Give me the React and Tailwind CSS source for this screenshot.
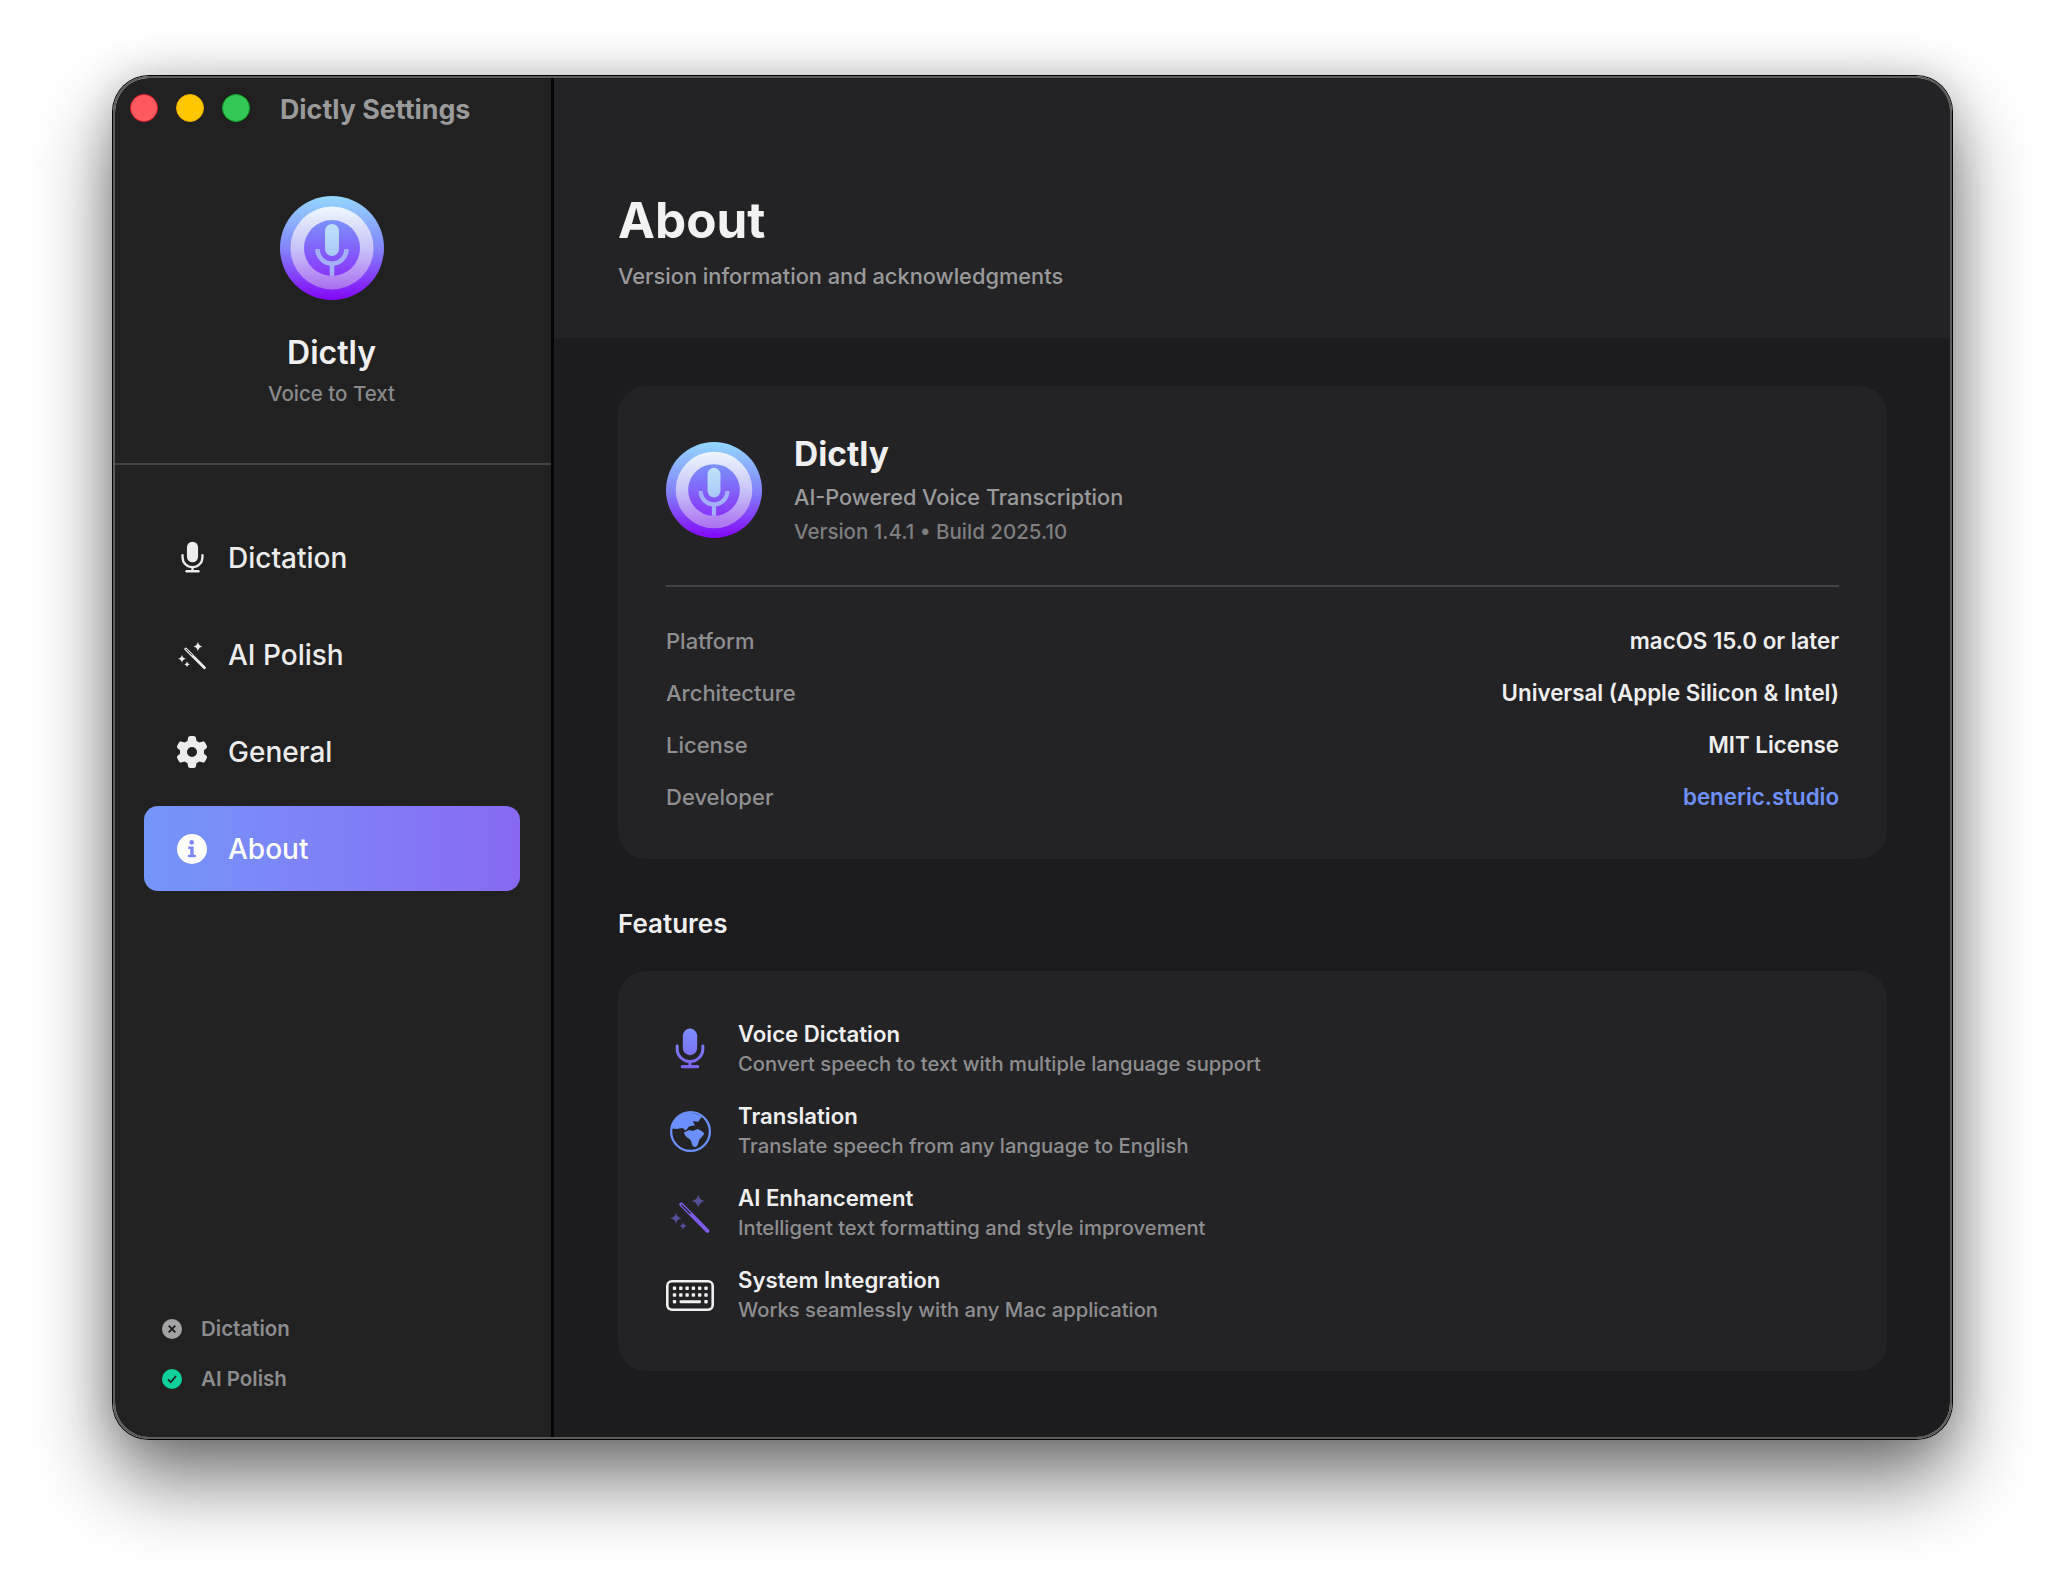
import { FaGear } from "react-icons/fa6";

const font = { fontFamily: "Inter, 'Noto Sans', sans-serif" };

function AppLogo({ id, className }) {
  return (
    <svg viewBox="0 0 104 104" className={className}>
      <defs>
        <linearGradient id={`${id}-outer`} x1="0" y1="0" x2="0" y2="1">
          <stop offset="0" stopColor="#93d8ff" />
          <stop offset="0.5" stopColor="#8385fb" />
          <stop offset="1" stopColor="#8406f8" />
        </linearGradient>
        <linearGradient id={`${id}-ring`} x1="0" y1="0" x2="0" y2="1">
          <stop offset="0" stopColor="#eef8ff" />
          <stop offset="0.5" stopColor="#c8c4f8" />
          <stop offset="1" stopColor="#ab6ff0" />
        </linearGradient>
        <linearGradient id={`${id}-inner`} x1="0" y1="0" x2="0" y2="1">
          <stop offset="0" stopColor="#7a92fb" />
          <stop offset="1" stopColor="#8a35fa" />
        </linearGradient>
        <linearGradient id={`${id}-mic`} x1="0" y1="0" x2="0" y2="1">
          <stop offset="0" stopColor="#bfe2fb" />
          <stop offset="1" stopColor="#a9c8f8" />
        </linearGradient>
        <clipPath id={`${id}-clip`}>
          <circle cx="52" cy="52" r="28" />
        </clipPath>
      </defs>
      <circle cx="52" cy="52" r="52" fill={`url(#${id}-outer)`} />
      <circle cx="52" cy="52" r="41.5" fill={`url(#${id}-ring)`} />
      <circle cx="52" cy="52" r="28" fill={`url(#${id}-inner)`} />
      <g clipPath={`url(#${id}-clip)`}>
        <path d="M37.5 53 a14.5 14.5 0 0 0 29 0" fill="none" stroke="#a3b0f8" strokeWidth="4.6" />
        <rect x="49.7" y="66" width="4.6" height="16" fill="#a3b0f8" />
      </g>
      <rect x="45" y="28" width="14" height="32" rx="7" fill={`url(#${id}-mic)`} />
    </svg>
  );
}

function MicIcon({ className, fill = "currentColor", gradient }) {
  const paint = gradient ? "url(#mic-grad)" : fill;
  return (
    <svg viewBox="0 0 24 34" className={className} fill="none">
      {gradient && (
        <defs>
          <linearGradient id="mic-grad" gradientUnits="userSpaceOnUse" x1="0" y1="0" x2="0" y2="34">
            <stop offset="0" stopColor="#7d8ffa" />
            <stop offset="1" stopColor="#7a60f0" />
          </linearGradient>
        </defs>
      )}
      <rect x="6.2" y="0.5" width="11.6" height="21.5" rx="5.8" fill={paint} />
      <path d="M1.6 14.5v2.2a10.4 10.4 0 0 0 20.8 0v-2.2" stroke={paint} strokeWidth="2.4" strokeLinecap="round" />
      <rect x="10.8" y="26.5" width="2.4" height="5" fill={paint} />
      <rect x="4.5" y="30" width="15" height="2.6" rx="1.3" fill={paint} />
    </svg>
  );
}

const sparkle = (x, y, r) =>
  `M${x} ${y - r}Q${x + r * 0.15} ${y - r * 0.15} ${x + r} ${y}Q${x + r * 0.15} ${y + r * 0.15} ${x} ${y + r}Q${x - r * 0.15} ${y + r * 0.15} ${x - r} ${y}Q${x - r * 0.15} ${y - r * 0.15} ${x} ${y - r}Z`;

function WandIcon({ className, wand = "currentColor", stars = "currentColor", hole = "#212121" }) {
  return (
    <svg viewBox="0 0 32 32" className={className} fill="none">
      <path d={sparkle(22.3, 6.9, 5)} fill={stars} />
      <path d={sparkle(5.3, 20, 4.3)} fill={stars} />
      <path d={sparkle(10.7, 25.9, 3)} fill={stars} />
      <path d="M9.3 9.5 L29.3 29.6" stroke={wand} strokeWidth="3" strokeLinecap="round" />
      <path d="M9.6 9.8 L16 16.2" stroke={hole} strokeWidth="1" strokeLinecap="round" />
    </svg>
  );
}

function GlobeIcon({ className }) {
  return (
    <svg viewBox="0 0 40 40" className={className} fill="none">
      <circle cx="20" cy="20" r="18.9" stroke="currentColor" strokeWidth="2.2" />
      <path
        d="M1.5 17Q3 7 12 2.5Q21 0 31 5.5L27.5 10.5L22 10L24.5 14L18.5 15L15.5 19L12 16.5L6.5 17.5Z"
        fill="currentColor"
      />
      <path
        d="M13.5 21L19 18.5L22 19.5L27 17.5Q31.5 19 33.5 22Q31 26 28.5 28Q28 32 25.5 35Q22.5 35.5 21.5 33Q21 29.5 19.5 27.5Q15 25.5 13.5 21Z"
        fill="currentColor"
      />
    </svg>
  );
}

function InfoIcon({ className }) {
  return (
    <svg viewBox="0 0 30 30" className={className}>
      <circle cx="15" cy="15" r="15" fill="#fff" />
      <circle cx="14.7" cy="8.4" r="2.3" fill="#7c86f8" />
      <path d="M11.3 12.4h5.3v8.3h2.2v2.5h-7.9v-2.5h2.4v-5.8h-2z" fill="#7c86f8" />
    </svg>
  );
}

function KeyboardIcon({ className }) {
  const cols = [8.5, 14.8, 21.1, 27.4, 33.7, 40];
  const key = (x, y) => (
    <rect key={`${x}-${y}`} x={x - 1.7} y={y - 1.7} width="3.4" height="3.4" rx="0.8" fill="currentColor" />
  );
  return (
    <svg viewBox="0 0 48 31" className={className} fill="none">
      <rect x="1.3" y="1.3" width="45.4" height="28.4" rx="4.6" stroke="currentColor" strokeWidth="2.6" />
      {cols.map((x) => key(x, 8.3))}
      {cols.map((x) => key(x, 15))}
      {key(8.5, 21.7)}
      <rect x="13.5" y="20.2" width="21.5" height="3" rx="1.2" fill="currentColor" />
      {key(40, 21.7)}
    </svg>
  );
}

function NavItem({ icon, label, active }) {
  return (
    <div
      className={`flex h-[85px] items-center rounded-[14px] pl-[32px] ${
        active ? "bg-gradient-to-r from-[#7396fb] to-[#8769f1] text-white" : "text-[#ececec]"
      }`}
    >
      <span className="flex w-[32px] items-center justify-center">{icon}</span>
      <span className="ml-[20px] text-[28px] font-medium leading-none">{label}</span>
    </div>
  );
}

function InfoRow({ label, value, link }) {
  return (
    <div className="flex h-[52px] items-center justify-between leading-none">
      <span className="text-[22px] font-medium text-[#8f8f91]">{label}</span>
      <span className={`text-[22.3px] font-semibold ${link ? "text-[#6f90f8]" : "text-[#efefef]"}`}>{value}</span>
    </div>
  );
}

function Feature({ icon, title, text }) {
  return (
    <div className="flex h-[82px] items-center">
      <span className="flex w-[48px] items-center justify-center">{icon}</span>
      <div className="ml-[24px]">
        <div className="text-[22.2px] font-semibold leading-[30px] text-[#efefef]">{title}</div>
        <div className="text-[20.2px] font-medium leading-[30px] text-[#8e8e90]">{text}</div>
      </div>
    </div>
  );
}

function StatusRow({ ok, label }) {
  return (
    <div className="flex h-[50px] items-center">
      <svg viewBox="0 0 20 20" className="ml-[47px] h-[20px] w-[20px]">
        <circle cx="10" cy="10" r="10" fill={ok ? "#10d09c" : "#a3a3a5"} />
        {ok ? (
          <path d="M6 10.4l2.8 2.9 5.2-6.3" fill="none" stroke="#1c1c1c" strokeWidth="1.7" />
        ) : (
          <path d="M6.7 6.7l6.6 6.6M13.3 6.7l-6.6 6.6" stroke="#1c1c1c" strokeWidth="1.9" />
        )}
      </svg>
      <span className="ml-[19px] text-[20.5px] font-semibold leading-none text-[#8c8c8e]">{label}</span>
    </div>
  );
}

export default function App() {
  return (
    <div className="h-[1588px] w-[2064px] overflow-hidden bg-white pl-[113px] pt-[76px]" style={font}>
      <div className="flex h-[1363px] w-[1839px] overflow-hidden rounded-[36px] border-2 border-[#5c5c5c] shadow-[0_0_0_1px_#000,0_40px_80px_rgba(0,0,0,0.55),0_0_40px_rgba(0,0,0,0.18)]">
        <aside className="flex w-[439px] shrink-0 flex-col border-r-[3px] border-[#050505] bg-[#212121]">
          <div className="flex h-[387px] flex-col border-b-2 border-[#434343] pr-[3px]">
            <div className="flex h-[60px] items-center pl-[15px]">
              <span className="h-[28px] w-[28px] rounded-full border border-[#e0212f] bg-[#ff5a5f]" />
              <span className="ml-[18px] h-[28px] w-[28px] rounded-full border border-[#e8a800] bg-[#ffc700]" />
              <span className="ml-[18px] h-[28px] w-[28px] rounded-full border border-[#12a828] bg-[#33c857]" />
              <span className="ml-[30px] mt-[2px] text-[26.8px] font-bold leading-none text-[#9a9a9a]">Dictly Settings</span>
            </div>
            <AppLogo id="side" className="mx-auto mt-[58px] h-[104px] w-[104px]" />
            <div className="mt-[31px] text-center text-[32px] font-semibold leading-[44px] text-[#f0f0f0]">Dictly</div>
            <div className="mt-[5px] text-center text-[20.5px] font-medium leading-[28px] text-[#8a8a8c]">Voice to Text</div>
          </div>
          <nav className="flex flex-col gap-[12px] pl-[29px] pr-[31px] pt-[50px]">
            <NavItem icon={<MicIcon className="h-[33px] w-[23px]" />} label="Dictation" />
            <NavItem icon={<WandIcon className="h-[30px] w-[30px]" />} label="AI Polish" />
            <NavItem icon={<FaGear className="h-[32px] w-[32px]" />} label="General" />
            <NavItem active icon={<InfoIcon className="h-[30px] w-[30px]" />} label="About" />
          </nav>
          <div className="mt-auto pb-[33px]">
            <StatusRow label="Dictation" />
            <StatusRow ok label="AI Polish" />
          </div>
        </aside>
        <main className="flex min-w-0 flex-1 flex-col bg-[#1c1c1e]">
          <header className="h-[260px] shrink-0 bg-[#232325] pl-[64px] pt-[111px]">
            <h1 className="text-[49.5px] font-bold leading-[62px] text-[#f2f2f2]">About</h1>
            <p className="mt-[9px] text-[21.8px] font-medium leading-[32px] text-[#9a9a9c]">
              Version information and acknowledgments
            </p>
          </header>
          <div className="flex flex-1 flex-col pl-[64px] pr-[63px] pt-[48px]">
            <section className="h-[473px] rounded-[28px] bg-[#232326] px-[48px] pt-[48px]">
              <div className="flex h-[153px] items-start border-b-2 border-[#424244]">
                <AppLogo id="card" className="mt-[8px] h-[96px] w-[96px]" />
                <div className="ml-[32px]">
                  <div className="h-[40px] text-[33.5px] font-bold leading-[40px] text-[#f0f0f0]">Dictly</div>
                  <div className="mt-[8px] text-[21.7px] font-medium leading-[30px] text-[#9a9a9c]">AI-Powered Voice Transcription</div>
                  <div className="mt-[6px] text-[20.5px] font-medium leading-[28px] text-[#7e7e80]">Version 1.4.1 • Build 2025.10</div>
                </div>
              </div>
              <div className="pt-[28px]">
                <InfoRow label="Platform" value="macOS 15.0 or later" />
                <InfoRow label="Architecture" value="Universal (Apple Silicon & Intel)" />
                <InfoRow label="License" value="MIT License" />
                <InfoRow label="Developer" value="beneric.studio" link />
              </div>
            </section>
            <h2 className="mt-[47px] text-[26px] font-semibold leading-[36px] text-[#efefef]">Features</h2>
            <section className="mt-[29px] h-[400px] rounded-[28px] bg-[#232326] px-[48px] pt-[37px]">
              <Feature icon={<MicIcon className="h-[42px] w-[30px]" gradient />} title="Voice Dictation" text="Convert speech to text with multiple language support" />
              <Feature icon={<GlobeIcon className="h-[41px] w-[41px] text-[#6c90fb]" />} title="Translation" text="Translate speech from any language to English" />
              <Feature icon={<WandIcon className="h-[42px] w-[42px]" wand="#7d5cea" stars="#55509a" hole="#232326" />} title="AI Enhancement" text="Intelligent text formatting and style improvement" />
              <Feature icon={<KeyboardIcon className="h-[31px] w-[48px] text-[#f0f0f0]" />} title="System Integration" text="Works seamlessly with any Mac application" />
            </section>
          </div>
        </main>
      </div>
    </div>
  );
}
